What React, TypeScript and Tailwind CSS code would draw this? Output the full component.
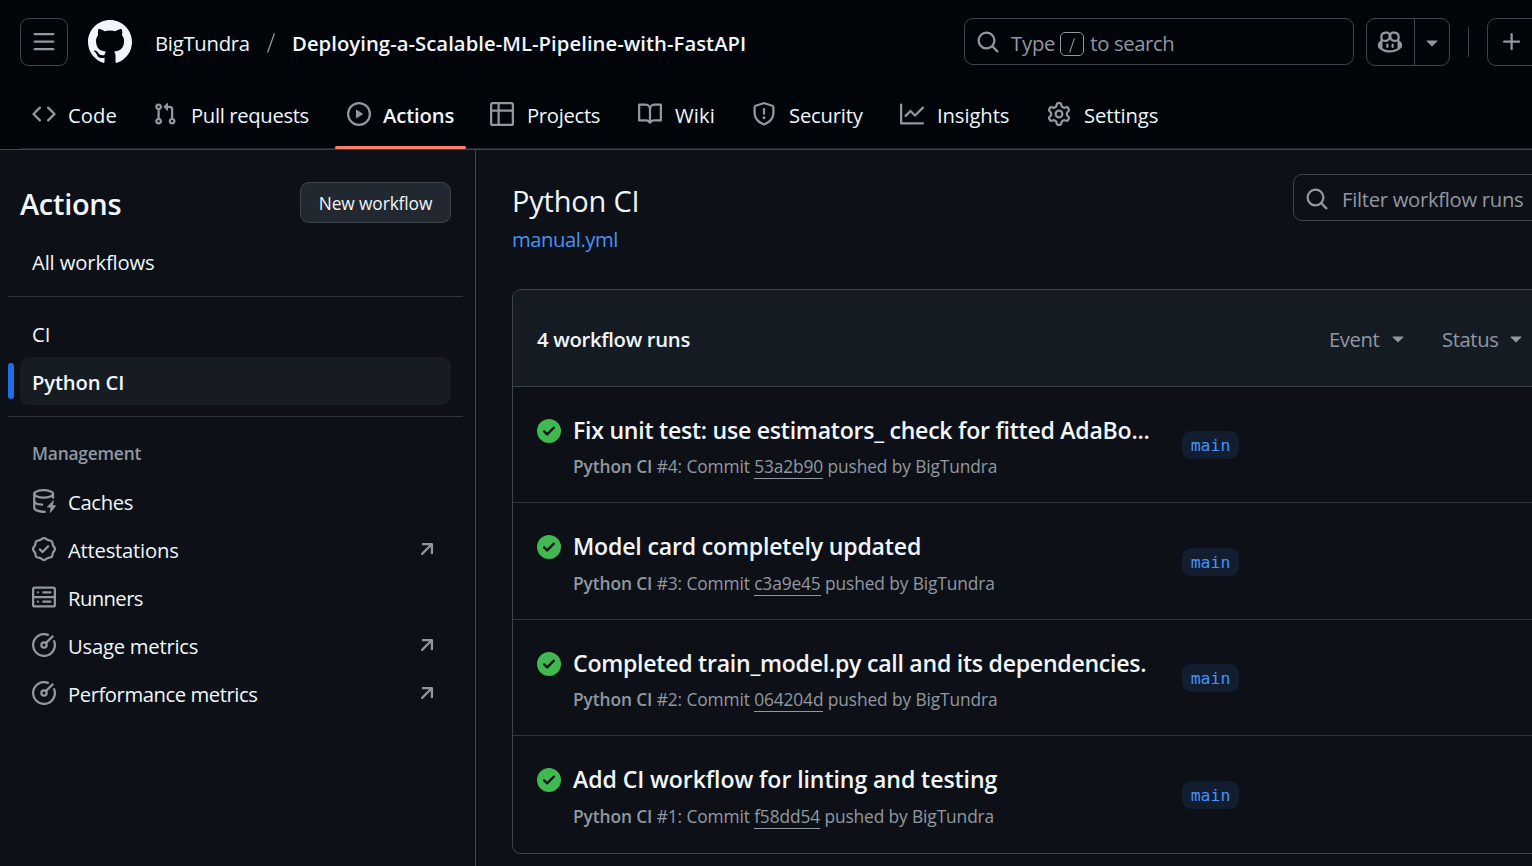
import type { ReactNode } from "react";

const paths = {
  menu: "M1 2.75A.75.75 0 0 1 1.75 2h12.5a.75.75 0 0 1 0 1.5H1.75A.75.75 0 0 1 1 2.75Zm0 5A.75.75 0 0 1 1.75 7h12.5a.75.75 0 0 1 0 1.5H1.75A.75.75 0 0 1 1 7.75ZM1.75 12h12.5a.75.75 0 0 1 0 1.5H1.75a.75.75 0 0 1 0-1.5Z",
  github:
    "M8 0c4.42 0 8 3.58 8 8a8.013 8.013 0 0 1-5.45 7.59c-.4.08-.55-.17-.55-.38 0-.27.01-1.13.01-2.2 0-.75-.25-1.23-.54-1.48 1.78-.2 3.65-.88 3.65-3.95 0-.88-.31-1.59-.82-2.15.08-.2.36-1.02-.08-2.12 0 0-.67-.22-2.2.82-.64-.18-1.32-.27-2-.27-.68 0-1.36.09-2 .27-1.53-1.03-2.2-.82-2.2-.82-.44 1.1-.16 1.92-.08 2.12-.51.56-.82 1.28-.82 2.15 0 3.06 1.86 3.75 3.64 3.95-.23.2-.44.55-.51 1.07-.46.21-1.61.55-2.33-.66-.15-.24-.6-.83-1.23-.82-.67.01-.27.38.01.53.34.19.73.9.82 1.13.16.45.68 1.31 2.69.94 0 .67.01 1.3.01 1.49 0 .21-.15.45-.55.38A7.995 7.995 0 0 1 0 8c0-4.42 3.58-8 8-8Z",
  code: "m11.28 3.22 4.25 4.25a.75.75 0 0 1 0 1.06l-4.25 4.25a.749.749 0 0 1-1.275-.326.749.749 0 0 1 .215-.734L13.94 8l-3.72-3.72a.749.749 0 0 1 .326-1.275.749.749 0 0 1 .734.215Zm-6.56 0a.751.751 0 0 1 1.042.018.751.751 0 0 1 .018 1.042L2.06 8l3.72 3.72a.749.749 0 0 1-.326 1.275.749.749 0 0 1-.734-.215L.47 8.53a.75.75 0 0 1 0-1.06Z",
  pull: "M1.5 3.25a2.25 2.25 0 1 1 3 2.122v5.256a2.251 2.251 0 1 1-1.5 0V5.372A2.25 2.25 0 0 1 1.5 3.25Zm5.677-.177L9.573.677A.25.25 0 0 1 10 .854V2.5h1A2.5 2.5 0 0 1 13.5 5v5.628a2.251 2.251 0 1 1-1.5 0V5a1 1 0 0 0-1-1h-1v1.646a.25.25 0 0 1-.427.177L7.177 3.427a.25.25 0 0 1 0-.354ZM3.75 2.5a.75.75 0 1 0 0 1.5.75.75 0 0 0 0-1.5Zm0 9.5a.75.75 0 1 0 0 1.5.75.75 0 0 0 0-1.5Zm8.25.75a.75.75 0 1 0 1.5 0 .75.75 0 0 0-1.5 0Z",
  play: "M8 0a8 8 0 1 1 0 16A8 8 0 0 1 8 0ZM1.5 8a6.5 6.5 0 1 0 13 0 6.5 6.5 0 0 0-13 0Zm4.879-2.773 4.264 2.559a.25.25 0 0 1 0 .428l-4.264 2.559A.25.25 0 0 1 6 10.559V5.442a.25.25 0 0 1 .379-.215Z",
  table:
    "M0 1.75C0 .784.784 0 1.75 0h12.5C15.216 0 16 .784 16 1.75v12.5A1.75 1.75 0 0 1 14.25 16H1.75A1.75 1.75 0 0 1 0 14.25ZM6.5 6.5v8h7.75a.25.25 0 0 0 .25-.25V6.5Zm8-1.5V1.75a.25.25 0 0 0-.25-.25H6.5V5Zm-13 1.5v7.75c0 .138.112.25.25.25H5v-8ZM5 5V1.5H1.75a.25.25 0 0 0-.25.25V5Z",
  book: "M0 1.75A.75.75 0 0 1 .75 1h4.253c1.227 0 2.317.59 3 1.501A3.743 3.743 0 0 1 11.006 1h4.245a.75.75 0 0 1 .75.75v10.5a.75.75 0 0 1-.75.75h-4.507a2.25 2.25 0 0 0-1.591.659l-.622.621a.75.75 0 0 1-1.06 0l-.622-.621A2.25 2.25 0 0 0 5.258 13H.75a.75.75 0 0 1-.75-.75Zm7.251 10.324.004-5.073-.002-2.253A2.25 2.25 0 0 0 5.003 2.5H1.5v9h3.757a3.75 3.75 0 0 1 1.994.574ZM8.755 4.75l-.004 7.322a3.752 3.752 0 0 1 1.992-.572H14.5v-9h-3.495a2.25 2.25 0 0 0-2.25 2.25Z",
  shield:
    "M7.467.133a1.748 1.748 0 0 1 1.066 0l5.25 1.68A1.75 1.75 0 0 1 15 3.48V7c0 1.566-.32 3.182-1.303 4.682-.983 1.498-2.585 2.813-5.032 3.855a1.697 1.697 0 0 1-1.33 0c-2.447-1.042-4.049-2.357-5.032-3.855C1.32 10.182 1 8.566 1 7V3.48a1.75 1.75 0 0 1 1.217-1.667Zm.61 1.429a.25.25 0 0 0-.153 0l-5.25 1.68a.25.25 0 0 0-.174.238V7c0 1.358.275 2.666 1.057 3.86.784 1.194 2.121 2.34 4.366 3.297a.196.196 0 0 0 .154 0c2.245-.956 3.582-2.104 4.366-3.298C13.225 9.666 13.5 8.36 13.5 7V3.48a.251.251 0 0 0-.174-.237l-5.25-1.68ZM8.75 4.75v3a.75.75 0 0 1-1.5 0v-3a.75.75 0 0 1 1.5 0ZM9 10.5a1 1 0 1 1-2 0 1 1 0 0 1 2 0Z",
  graph:
    "M1.5 1.75V13.5h13.75a.75.75 0 0 1 0 1.5H.75a.75.75 0 0 1-.75-.75V1.75a.75.75 0 0 1 1.5 0Zm14.28 2.53-5.25 5.25a.75.75 0 0 1-1.06 0L7 7.06 4.28 9.78a.751.751 0 0 1-1.042-.018.751.751 0 0 1-.018-1.042l3.25-3.25a.75.75 0 0 1 1.06 0L10 7.94l4.72-4.72a.751.751 0 0 1 1.042.018.751.751 0 0 1 .018 1.042Z",
  gear: "M8 0a8.2 8.2 0 0 1 .701.031C9.444.095 9.99.645 10.16 1.29l.288 1.107c.018.066.079.158.212.224.231.114.454.243.668.386.123.082.233.09.299.071l1.103-.303c.644-.176 1.392.021 1.82.63.27.385.506.792.704 1.218.315.675.111 1.422-.364 1.891l-.814.806c-.049.048-.098.147-.088.294.016.257.016.515 0 .772-.01.147.038.246.088.294l.814.806c.475.469.679 1.216.364 1.891a7.977 7.977 0 0 1-.704 1.217c-.428.61-1.176.807-1.82.63l-1.102-.302c-.067-.019-.177-.011-.3.071a5.909 5.909 0 0 1-.668.386c-.133.066-.194.158-.211.224l-.29 1.106c-.168.646-.715 1.196-1.458 1.26a8.006 8.006 0 0 1-1.402 0c-.743-.064-1.289-.614-1.458-1.26l-.289-1.106c-.018-.066-.079-.158-.212-.224a5.738 5.738 0 0 1-.668-.386c-.123-.082-.233-.09-.299-.071l-1.103.303c-.644.176-1.392-.021-1.82-.63a8.12 8.12 0 0 1-.704-1.218c-.315-.675-.111-1.422.363-1.891l.815-.806c.05-.048.098-.147.088-.294a6.214 6.214 0 0 1 0-.772c.01-.147-.038-.246-.088-.294l-.815-.806C.635 6.045.431 5.298.746 4.623a7.92 7.92 0 0 1 .704-1.217c.428-.61 1.176-.807 1.82-.63l1.102.302c.067.019.177.011.3-.071.214-.143.437-.272.668-.386.133-.066.194-.158.211-.224l.29-1.106C6.009.645 6.556.095 7.299.03 7.53.01 7.764 0 8 0Zm-.571 1.525c-.036.003-.108.036-.137.146l-.289 1.105c-.147.561-.549.967-.998 1.189-.173.086-.34.183-.5.29-.417.278-.97.423-1.529.27l-1.103-.303c-.109-.03-.175.016-.195.045-.22.312-.412.644-.573.99-.014.031-.021.11.059.19l.815.806c.411.406.562.957.53 1.456a4.709 4.709 0 0 0 0 .582c.032.499-.119 1.05-.53 1.456l-.815.806c-.081.08-.073.159-.059.19.162.346.353.677.573.989.02.03.085.076.195.046l1.102-.303c.56-.153 1.113-.008 1.53.27.161.107.328.204.501.29.447.222.85.629.997 1.189l.289 1.105c.029.109.101.143.137.146a6.6 6.6 0 0 0 1.142 0c.036-.003.108-.036.137-.146l.289-1.105c.147-.561.549-.967.998-1.189.173-.086.34-.183.5-.29.417-.278.97-.423 1.529-.27l1.103.303c.109.029.175-.016.195-.045.22-.313.411-.644.573-.99.014-.031.021-.11-.059-.19l-.815-.806c-.411-.406-.562-.957-.53-1.456a4.709 4.709 0 0 0 0-.582c-.032-.499.119-1.05.53-1.456l.815-.806c.081-.08.073-.159.059-.19a6.464 6.464 0 0 0-.573-.989c-.02-.03-.085-.076-.195-.046l-1.102.303c-.56.153-1.113.008-1.53-.27a4.44 4.44 0 0 0-.501-.29c-.447-.222-.85-.629-.997-1.189l-.289-1.105c-.029-.11-.101-.143-.137-.146a6.6 6.6 0 0 0-1.142 0ZM11 8a3 3 0 1 1-6 0 3 3 0 0 1 6 0ZM9.5 8a1.5 1.5 0 1 0-3.001.001A1.5 1.5 0 0 0 9.5 8Z",
  search:
    "M10.68 11.74a6 6 0 0 1-7.922-8.982 6 6 0 0 1 8.982 7.922l3.04 3.04a.749.749 0 0 1-.326 1.275.749.749 0 0 1-.734-.215ZM11.5 7a4.499 4.499 0 1 0-8.997 0A4.499 4.499 0 0 0 11.5 7Z",
  copilot:
    "M7.998 15.035c-4.562 0-7.873-2.914-7.998-3.749V9.338c.085-.628.677-1.686 1.588-2.065.013-.07.024-.143.036-.218.029-.183.06-.384.126-.612-.201-.508-.254-1.084-.254-1.656 0-.87.128-1.769.693-2.484.579-.733 1.494-1.124 2.724-1.261 1.206-.134 2.262.034 2.944.765.05.053.096.108.139.165.044-.057.094-.112.143-.165.682-.731 1.738-.899 2.944-.765 1.23.137 2.145.528 2.724 1.261.566.715.693 1.614.693 2.484 0 .572-.053 1.148-.254 1.656.066.228.098.429.126.612.012.076.024.148.037.218.924.385 1.522 1.471 1.591 2.095v1.872c0 .766-3.351 3.795-8.002 3.795Zm0-1.485c2.28 0 4.584-1.11 5.002-1.433V7.862l-.023-.116c-.49.21-1.075.291-1.727.291-1.146 0-2.059-.327-2.71-.991A3.222 3.222 0 0 1 8 6.303a3.24 3.24 0 0 1-.544.743c-.65.664-1.563.991-2.71.991-.652 0-1.236-.081-1.727-.291l-.023.116v4.255c.419.323 2.722 1.433 5.002 1.433ZM6.762 2.83c-.193-.206-.637-.413-1.682-.297-1.019.113-1.479.404-1.713.7-.247.312-.369.789-.369 1.554 0 .793.129 1.171.308 1.371.162.181.519.379 1.442.379.853 0 1.339-.235 1.638-.54.315-.322.527-.827.617-1.553.117-.935-.037-1.395-.241-1.614Zm4.155-.297c-1.044-.116-1.488.091-1.681.297-.204.219-.359.679-.242 1.614.091.726.303 1.231.618 1.553.299.305.784.54 1.638.54.922 0 1.28-.198 1.442-.379.179-.2.308-.578.308-1.371 0-.765-.123-1.242-.37-1.554-.233-.296-.693-.587-1.713-.7ZM6.25 9.037a.75.75 0 0 1 .75.75v1.501a.75.75 0 0 1-1.5 0V9.787a.75.75 0 0 1 .75-.75Zm4.25.75v1.501a.75.75 0 0 1-1.5 0V9.787a.75.75 0 0 1 1.5 0Z",
  triangle:
    "m4.427 7.427 3.396 3.396a.25.25 0 0 0 .354 0l3.396-3.396A.25.25 0 0 0 11.396 7H4.604a.25.25 0 0 0-.177.427Z",
  plus: "M7.75 2a.75.75 0 0 1 .75.75V7h4.25a.75.75 0 0 1 0 1.5H8.5v4.25a.75.75 0 0 1-1.5 0V8.5H2.75a.75.75 0 0 1 0-1.5H7V2.75A.75.75 0 0 1 7.75 2Z",
  verified:
    "m9.585.52.929.68c.153.112.331.186.518.215l1.138.175a2.678 2.678 0 0 1 2.24 2.24l.174 1.139c.029.187.103.365.215.518l.68.928a2.677 2.677 0 0 1 0 3.17l-.68.928a1.174 1.174 0 0 0-.215.518l-.175 1.138a2.678 2.678 0 0 1-2.241 2.241l-1.138.175a1.17 1.17 0 0 0-.518.215l-.928.68a2.677 2.677 0 0 1-3.17 0l-.928-.68a1.174 1.174 0 0 0-.518-.215L3.83 14.41a2.678 2.678 0 0 1-2.24-2.24l-.175-1.138a1.17 1.17 0 0 0-.215-.518l-.68-.928a2.677 2.677 0 0 1 0-3.17l.68-.928c.112-.153.186-.331.215-.518l.175-1.14a2.678 2.678 0 0 1 2.24-2.24l1.139-.175c.187-.029.365-.103.518-.215l.928-.68a2.677 2.677 0 0 1 3.17 0ZM7.303 1.728l-.927.68a2.67 2.67 0 0 1-1.18.489l-1.137.174a1.179 1.179 0 0 0-.987.987l-.174 1.136a2.677 2.677 0 0 1-.489 1.18l-.68.928a1.18 1.18 0 0 0 0 1.394l.68.927c.256.348.424.753.489 1.18l.174 1.137c.078.509.478.909.987.987l1.136.174a2.67 2.67 0 0 1 1.18.489l.928.68c.414.305.979.305 1.394 0l.927-.68a2.67 2.67 0 0 1 1.18-.489l1.137-.174a1.18 1.18 0 0 0 .987-.987l.174-1.136a2.67 2.67 0 0 1 .489-1.18l.68-.928a1.176 1.176 0 0 0 0-1.394l-.68-.927a2.686 2.686 0 0 1-.489-1.18l-.174-1.137a1.179 1.179 0 0 0-.987-.987l-1.136-.174a2.677 2.677 0 0 1-1.18-.489l-.928-.68a1.176 1.176 0 0 0-1.394 0ZM11.28 6.78l-3.75 3.75a.75.75 0 0 1-1.06 0L4.72 8.78a.751.751 0 0 1 .018-1.042.751.751 0 0 1 1.042-.018L7 8.94l3.22-3.22a.751.751 0 0 1 1.042.018.751.751 0 0 1 .018 1.042Z",
  external:
    "M4.53 4.75A.75.75 0 0 1 5.28 4h6.01a.75.75 0 0 1 .75.75v6.01a.75.75 0 0 1-1.5 0v-4.26l-5.26 5.27a.749.749 0 0 1-1.275-.326.749.749 0 0 1 .215-.734L9.48 5.5h-4.2a.75.75 0 0 1-.75-.75Z",
  success:
    "M8 16A8 8 0 1 1 8 0a8 8 0 0 1 0 16Zm3.78-9.72a.751.751 0 0 0-.018-1.042.751.751 0 0 0-1.042-.018L6.75 9.19 5.28 7.72a.751.751 0 0 0-1.042.018.751.751 0 0 0-.018 1.042l2 2a.75.75 0 0 0 1.06 0Z",
};

function Icon({ name, className = "size-6" }: { name: keyof typeof paths; className?: string }) {
  return (
    <svg viewBox="0 0 16 16" fill="currentColor" className={`shrink-0 ${className}`} aria-hidden="true">
      <path d={paths[name]} />
    </svg>
  );
}

function LineIcon({ children }: { children: ReactNode }) {
  return (
    <svg
      viewBox="0 0 16 16"
      fill="none"
      stroke="currentColor"
      strokeWidth="1.5"
      strokeLinecap="round"
      className="size-6 shrink-0"
      aria-hidden="true"
    >
      {children}
    </svg>
  );
}

const CacheIcon = () => (
  <LineIcon>
    <ellipse cx="7.75" cy="3.25" rx="6.25" ry="2.5" />
    <path d="M1.5 3.25v9.25c0 1.5 2.9 2.7 7 2.75M1.5 7.75c0 1.3 2 2.4 5.25 2.7M14 3.25v2.5" />
    <path
      d="m14.1 7.6-4 4.3c-.2.2 0 .5.2.5h2.1l-.5 3c0 .4.4.6.6.3l3.4-4.3c.2-.2 0-.5-.2-.5h-1.9l.8-3c.1-.4-.3-.5-.5-.3Z"
      fill="currentColor"
      stroke="none"
    />
  </LineIcon>
);

const ServerIcon = () => (
  <LineIcon>
    <rect x=".75" y="1.75" width="14.5" height="12.5" rx="1" />
    <path d="M.75 8h14.5M4 4.9h.01M4 11.1h.01M7.5 4.9h4.75M7.5 11.1h4.75" />
  </LineIcon>
);

const MeterIcon = () => (
  <LineIcon>
    <path d="M10.6 1.24A7.25 7.25 0 1 0 14.76 5.4" />
    <circle cx="8" cy="8" r="1.75" />
    <path d="m9.4 6.6 4.35-4.35" />
  </LineIcon>
);

const tabs: { icon: keyof typeof paths; label: string; box: string; text: string; active?: boolean }[] = [
  { icon: "code", label: "Code", box: "w-[109px]", text: "tracking-[0.05px]" },
  { icon: "pull", label: "Pull requests", box: "w-[182px]", text: "ml-0.5 tracking-[-0.35px]" },
  { icon: "play", label: "Actions", box: "w-[131px]", text: "font-semibold tracking-[-0.15px]", active: true },
  { icon: "table", label: "Projects", box: "w-[136px]", text: "ml-px tracking-[-0.32px]" },
  { icon: "book", label: "Wiki", box: "w-[102px]", text: "ml-px tracking-[0.1px]" },
  { icon: "shield", label: "Security", box: "w-[136px]", text: "ml-px tracking-[-0.2px]" },
  { icon: "graph", label: "Insights", box: "w-[135px]", text: "ml-px tracking-[-0.1px]" },
  { icon: "gear", label: "Settings", box: "w-[136px]", text: "ml-px tracking-[-0.1px]" },
];

const management = [
  { icon: <CacheIcon />, label: "Caches", text: "tracking-[-0.33px]", external: false },
  { icon: <Icon name="verified" />, label: "Attestations", text: "tracking-[-0.23px]", external: true },
  { icon: <ServerIcon />, label: "Runners", text: "tracking-[-0.6px]", external: false },
  { icon: <MeterIcon />, label: "Usage metrics", text: "tracking-[-0.25px]", external: true },
  { icon: <MeterIcon />, label: "Performance metrics", text: "tracking-[-0.45px]", external: true },
];

const runs = [
  {
    title: "Fix unit test: use estimators_ check for fitted AdaBo...",
    text: "tracking-[-0.26px]",
    number: 4,
    commit: "53a2b90",
  },
  { title: "Model card completely updated", text: "tracking-[-0.18px]", number: 3, commit: "c3a9e45" },
  {
    title: "Completed train_model.py call and its dependencies.",
    text: "tracking-[-0.26px]",
    number: 2,
    commit: "064204d",
  },
  { title: "Add CI workflow for linting and testing", text: "tracking-[-0.09px]", number: 1, commit: "f58dd54" },
];

function Header() {
  return (
    <header className="flex h-[150px] flex-col border-b border-[#3d444d] bg-[#010409]">
      <div className="flex h-[84px] items-start pt-[18px] pl-5">
        <button className="flex size-12 shrink-0 items-center justify-center rounded-[9px] border border-[#3d444d] text-[#9198a1]">
          <Icon name="menu" />
        </button>
        <Icon name="github" className="mt-0.5 ml-5 size-11" />
        <nav className="flex h-[51px] w-[832px] shrink-0 items-center pl-[23px]">
          <span className="w-24 shrink-0 tracking-[-0.25px]">BigTundra</span>
          <svg viewBox="0 0 8 20" className="ml-4 h-5 w-2 shrink-0 -translate-y-px" aria-hidden="true">
            <path d="M7.4.5.6 19.5" stroke="#9198a1" strokeWidth="1.3" />
          </svg>
          <span className="ml-[17px] font-semibold tracking-[0.05px] whitespace-nowrap">
            Deploying-a-Scalable-ML-Pipeline-with-FastAPI
          </span>
        </nav>
        <div className="flex h-[47px] w-[390px] shrink-0 items-center rounded-[9px] border border-[#3d444d] pl-[11px] text-[#9198a1]">
          <Icon name="search" />
          <span className="mt-[3px] ml-[11px] tracking-[-0.2px]">Type</span>
          <kbd className="mt-[5px] ml-[5px] flex size-6 shrink-0 items-center justify-center rounded-[5px] border border-[#9198a1]">
            <svg viewBox="0 0 6 15" className="mt-0.5 h-[15px] w-1.5" aria-hidden="true">
              <path d="M5.4.4.6 14.6" stroke="#9198a1" strokeWidth="1.1" />
            </svg>
          </kbd>
          <span className="mt-[3px] ml-1.5 tracking-[-0.35px]">to search</span>
        </div>
        <div className="ml-3 flex h-12 w-[84px] shrink-0 rounded-[9px] border border-[#3d444d] text-[#9198a1]">
          <div className="flex w-12 items-center border-r border-[#3d444d] pl-[11px]">
            <Icon name="copilot" />
          </div>
          <div className="flex flex-1 items-center justify-center">
            <Icon name="triangle" />
          </div>
        </div>
        <div className="mt-[9px] ml-[18px] h-[30px] w-px shrink-0 bg-[#3d444d]" />
        <button className="ml-[18px] flex h-12 w-[84px] shrink-0 items-center rounded-[9px] border border-[#3d444d] pl-3 text-[#9198a1]">
          <Icon name="plus" />
        </button>
      </div>
      <nav className="ml-5 flex h-[65px] gap-3 border-b border-[#22282f]">
        {tabs.map((tab) => (
          <div key={tab.label} className={`relative flex h-[60px] shrink-0 items-center gap-3 px-3 ${tab.box}`}>
            <span className="flex text-[#9198a1]">
              <Icon name={tab.icon} />
            </span>
            <span className={`mt-0.5 whitespace-nowrap ${tab.text}`}>{tab.label}</span>
            {tab.active && <span className="absolute inset-x-0 top-[62px] h-[3px] rounded-xs bg-[#f78166]" />}
          </div>
        ))}
      </nav>
    </header>
  );
}

function Sidebar() {
  return (
    <aside className="flex w-[476px] shrink-0 flex-col border-r border-[#3d444d]">
      <div className="flex h-[88px] items-start justify-between pt-8 pr-6 pl-5">
        <h2 className="text-[29px] leading-[44px] font-semibold tracking-[-0.3px]">Actions</h2>
        <button className="flex h-[41px] w-[151px] items-center justify-center rounded-[9px] border border-[#3d444d] bg-[#212830] pt-0.5 text-[17.35px] tracking-[-0.12px]">
          New workflow
        </button>
      </div>
      <div className="flex h-12 items-center pl-8 tracking-[-0.15px]">All workflows</div>
      <div className="mt-2.5 ml-2 h-px w-[455px] bg-[#2f353d]" />
      <div className="mt-[13px] flex h-12 items-center pl-8">CI</div>
      <div className="-mt-px flex h-12 items-center">
        <span className="ml-2 h-9 w-1.5 rounded-full bg-[#1f6feb]" />
        <div className="ml-1.5 flex h-12 w-[431px] items-center rounded-[9px] bg-[#171b22] pt-0.5 pl-3 font-semibold tracking-[-0.15px]">
          Python CI
        </div>
      </div>
      <div className="mt-[11px] ml-2 h-px w-[455px] bg-[#2f353d]" />
      <h3 className="mt-[23px] pl-8 text-[17.35px] leading-[27px] font-semibold tracking-[-0.2px] text-[#9198a1]">
        Management
      </h3>
      <ul className="mt-[11px]">
        {management.map((item) => (
          <li key={item.label} className="flex h-12 items-center pr-9 pl-8">
            <span className="flex -translate-y-px text-[#9198a1]">{item.icon}</span>
            <span className={`ml-3 grow ${item.text}`}>{item.label}</span>
            {item.external && (
              <span className="flex -translate-y-px text-[#9198a1]">
                <Icon name="external" />
              </span>
            )}
          </li>
        ))}
      </ul>
    </aside>
  );
}

function Filter({ label, className }: { label: string; className: string }) {
  return (
    <div className={`flex shrink-0 items-center justify-between ${className}`}>
      <span className="mt-0.5 tracking-[-0.4px]">{label}</span>
      <Icon name="triangle" />
    </div>
  );
}

function Runs() {
  return (
    <main className="flex w-[1100px] shrink-0 flex-col pl-9">
      <div className="flex h-[139px] pt-6">
        <div className="w-[781px] shrink-0 pt-1.5">
          <h1 className="text-[29px] leading-[42px] tracking-[-0.2px]">Python CI</h1>
          <a className="block leading-[34px] tracking-[-0.45px] text-[#4493f8]">manual.yml</a>
        </div>
        <div className="flex h-[47px] w-[360px] shrink-0 items-center rounded-[9px] border border-[#3d444d] pl-[11px] text-[#9198a1]">
          <Icon name="search" className="mt-[3px] size-6" />
          <span className="mt-[3px] ml-[13px] tracking-[-0.3px]">Filter workflow runs</span>
        </div>
      </div>
      <section className="flex w-[1200px] flex-col overflow-hidden rounded-[9px] border border-[#3d444d]">
        <div className="flex h-[97px] items-center border-b border-[#3d444d] bg-[#151b23] pl-6">
          <h2 className="mt-0.5 w-[792px] shrink-0 font-semibold tracking-[-0.3px]">4 workflow runs</h2>
          <div className="flex gap-8 text-[#9198a1]">
            <Filter label="Event" className="w-[81px]" />
            <Filter label="Status" className="w-[86px]" />
          </div>
        </div>
        {runs.map((run) => (
          <article
            key={run.number}
            className="group flex items-start border-b border-[#2f353d] pl-6 last:border-b-0 odd:h-[117px] even:h-[116px]"
          >
            <span className="mt-8 flex text-[#3fb950]">
              <Icon name="success" />
            </span>
            <div className="ml-3 w-[609px] shrink-0 pt-[25px]">
              <h3 className={`text-[23.1px] leading-9 font-semibold whitespace-nowrap ${run.text}`}>{run.title}</h3>
              <p className="text-[17.35px] leading-9 tracking-[-0.12px] whitespace-nowrap text-[#9198a1] group-odd:mt-px">
                <b className="font-semibold tracking-[-0.1px]">Python CI</b> #{run.number}: Commit{" "}
                <span className="border-b border-[#9198a1]">{run.commit}</span> pushed by BigTundra
              </p>
            </div>
            <span className="mt-11 flex h-7 w-[57px] items-center justify-center rounded-[9px] bg-[#121d2f] pt-0.5 font-['DejaVu_Sans_Mono',monospace] text-[16.5px] text-[#4493f8] group-odd:mt-[45px]">
              main
            </span>
          </article>
        ))}
      </section>
    </main>
  );
}

export default function App() {
  return (
    <div className="flex h-[866px] w-[1532px] flex-col overflow-hidden bg-[#0d1117] font-['Open_Sans','Noto_Sans',sans-serif] text-[20.25px] text-[#f0f6fc]">
      <Header />
      <div className="flex min-h-0 flex-1">
        <Sidebar />
        <Runs />
      </div>
    </div>
  );
}
